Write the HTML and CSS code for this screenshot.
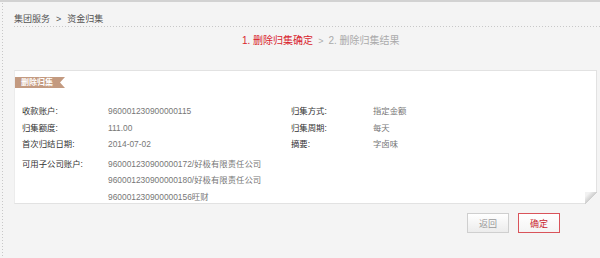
FILE: index.html
```html
<!DOCTYPE html>
<html lang="zh-CN">
<head>
    <meta charset="UTF-8">
    <title>资金归集</title>
    <link rel="stylesheet" href="styles.css">
</head>
<body>
    <div class="page">
        <div class="crumb">集团服务<span class="sep">&gt;</span>资金归集</div>
        <div class="steps">
            <span class="step active">1. 删除归集确定</span><span class="sep">&gt;</span><span class="step">2. 删除归集结果</span>
        </div>
        <div class="panel">
            <div class="tag">删除归集</div>
            <div class="info">
                <span class="label">收款账户:</span><span class="value">960001230900000115</span>
                <span class="label">归集方式:</span><span class="value">指定金额</span>
                <span class="label">归集额度:</span><span class="value">111.00</span>
                <span class="label">归集周期:</span><span class="value">每天</span>
                <span class="label">首次归结日期:</span><span class="value">2014-07-02</span>
                <span class="label">摘要:</span><span class="value">字卤味</span>
            </div>
            <div class="info sub">
                <span class="label">可用子公司账户:</span>
                <div class="value">
                    <div>960001230900000172/好极有限责任公司</div>
                    <div>960001230900000180/好极有限责任公司</div>
                    <div>960001230900000156旺财</div>
                </div>
            </div>
        </div>
        <div class="actions">
            <button class="btn">返回</button>
            <button class="btn primary">确定</button>
        </div>
    </div>
</body>
</html>
```

FILE: styles.css
```css
body {
    margin: 0;
    border-top: 2px solid #d2d2d2;
    background: #f4f4f4 linear-gradient(#c8c8c8 1px, transparent 1px) 2px 0 / 1px 3px repeat-y;
    font-family: "Liberation Sans", "Noto Sans CJK SC", sans-serif;
    color: #333;
    height: 256px;
}
.page {
    padding-left: 14px;
    padding-right: 3px;
}
.crumb {
    padding-top: 10px;
    line-height: 14px;
    font-size: 9px;
    color: #555;
    margin-right: -3px;
    background: linear-gradient(to right, #c8c8c8 1px, transparent 1px) 0 100% / 3px 1px repeat-x;
    height: 15px;
}
.crumb .sep {
    margin: 0 6px;
}
.steps {
    margin-top: 7px;
    padding-left: 228px;
    line-height: 14px;
    font-size: 10px;
    color: #aaa;
}
.steps .active {
    color: #d9232d;
}
.steps .sep {
    margin: 0 5px;
    font-size: 9px;
}
.panel {
    position: relative;
    margin-top: 22px;
    background: #fff;
    border: 1px solid #e2e2e2;
    border-left-color: #ececec;
    padding: 6px 0 4px 0;
    height: 122px;
}
.panel::after {
    content: "";
    position: absolute;
    right: -1px;
    bottom: -1px;
    width: 12px;
    height: 12px;
    background: linear-gradient(to top left, #f4f4f4 50%, #cfcfcf 50%, #f2f2f2 80%);
}
.tag {
    display: inline-block;
    height: 11px;
    line-height: 11px;
    width: 44px;
    padding-left: 6px;
    font-size: 8px;
    font-weight: bold;
    color: #fff;
    background: #c39a80;
    clip-path: polygon(0 0, 100% 0, calc(100% - 5px) 50%, 100% 100%, 0 100%);
    vertical-align: top;
}
.info {
    margin-top: 8px;
    padding-left: 7px;
    display: grid;
    grid-template-columns: 86px 183px 82px 1fr;
    line-height: 16.5px;
    font-size: 8.4px;
}
.info.sub {
    margin-top: 3px;
    grid-template-columns: 86px 1fr;
}
.label {
    color: #333;
}
.value {
    color: #777;
}
.actions {
    display: flex;
    justify-content: flex-end;
    gap: 9px;
    margin-top: 9px;
    padding-right: 37px;
}
.btn {
    width: 42px;
    height: 20px;
    padding: 0;
    font-family: inherit;
    font-size: 9px;
    color: #999;
    background: linear-gradient(#fff, #ececec);
    border: 1px solid #cfcfcf;
}
.btn.primary {
    color: #c9262e;
    background: linear-gradient(#fff, #f4f4f4);
    border-color: #d9535a;
}
```
